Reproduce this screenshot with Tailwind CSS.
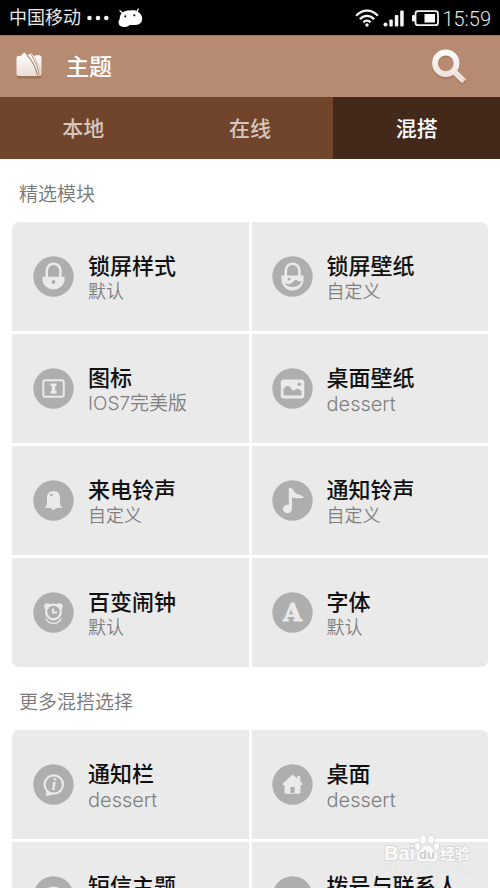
<!DOCTYPE html>
<html lang="zh-CN">
<head>
<meta charset="utf-8">
<meta name="viewport" content="width=device-width, initial-scale=1">
<title>主题</title>
<script src="https://cdn.jsdelivr.net/npm/@tailwindcss/browser@4"></script>
</head>
<body class="bg-white font-['Roboto','Noto_Sans_CJK_SC',sans-serif]">
<div class="relative flex h-screen flex-col overflow-hidden">

  <!-- Status bar -->
  <div class="flex h-[35px] shrink-0 items-center justify-between bg-black pr-[9px] pl-[9px] text-[#e6e6e6]">
    <div class="flex items-center gap-[6px]">
      <span class="text-[18px] leading-6">中国移动</span>
      <svg class="h-[6px] w-[22px]" viewBox="0 0 22 6" fill="#f2f2f2" aria-hidden="true"><circle cx="2.5" cy="3" r="2.3"/><circle cx="11" cy="3" r="2.3"/><circle cx="19.3" cy="3" r="2.3"/></svg>
      <svg class="ml-[3px] h-[20px] w-[25px]" viewBox="0 0 25 20" aria-hidden="true">
        <path d="M4.600 5.200 2 2.700M18.800 4.200 20.300 1" stroke="#fff" stroke-width="1.300" stroke-linecap="round"/>
        <path d="M4.500 4.500C7 2.700 9.500 2.400 12 2.500 15 2.200 18 2.300 20 3.800 22.800 5.600 24.300 8 24.200 11 24.100 14.500 21.500 16.800 17.400 17 15 17.100 13 16.800 11.500 17 10 18.500 8 19.200 5.500 19 2.500 18.800.5 17.300.5 14.500.5 13.200 1 12 1.700 11.300 1.500 8.500 2.500 6 4.500 4.500Z" fill="#fff"/>
        <circle cx="7.300" cy="8.300" r="1.100" fill="#111"/><circle cx="16.300" cy="7.300" r="1.100" fill="#111"/>
      </svg>
    </div>
    <div class="flex items-center">
      <svg class="h-[18px] w-[24px]" viewBox="0 0 24 18" fill="none" stroke="#f5f5f5" stroke-width="2.300" aria-hidden="true">
        <path d="M1.200 6.800C7-.1 17-.1 22.800 6.800M4.900 10.200c4-4.400 10.200-4.400 14.200 0M8.400 13.400c2.200-2.200 5-2.200 7.200 0"/><circle cx="12" cy="16" r="1.700" fill="#f5f5f5" stroke="none"/>
      </svg>
      <svg class="ml-[4px] h-[18px] w-[22px]" viewBox="0 0 22 18" fill="#f5f5f5" aria-hidden="true">
        <circle cx="2.500" cy="15.500" r="2"/><rect x="6.300" y="10.500" width="3.500" height="7" rx="1"/><rect x="11.800" y="6" width="3.500" height="11.500" rx="1"/><rect x="17.200" y="1.500" width="3.500" height="16" rx="1"/>
      </svg>
      <svg class="ml-[7px] h-[18px] w-[27px]" viewBox="0 0 27 18" aria-hidden="true">
        <rect x="3.500" y="2.200" width="22.500" height="14" rx="2.500" fill="none" stroke="#f5f5f5" stroke-width="1.800"/><rect x="0" y="6" width="3" height="6.500" rx="1.200" fill="#f5f5f5"/><rect x="12.500" y="5" width="10.500" height="8.500" fill="#fff"/>
      </svg>
      <span class="ml-[3px] pt-[2px] text-[20px] leading-6 font-light">15:59</span>
    </div>
  </div>

  <!-- Title bar -->
  <header class="flex h-[62px] shrink-0 items-center border-t border-[#a57e67] bg-[#b78b71] pr-[32px] pl-[14px]">
    <svg class="h-[32px] w-[30px]" viewBox="0 0 30 32" aria-hidden="true">
      <defs><linearGradient id="paper" x1="0" y1="0" x2="0" y2="1"><stop offset="0" stop-color="#fff"/><stop offset="1" stop-color="#e9ddd6"/></linearGradient></defs>
      <rect x="3" y="8" width="24.500" height="19.500" rx="2" fill="#6d4329" opacity=".35"/>
      <path d="M2.500 6.800Q2.500 5 4.500 5H6.500L10.300 1.200 13 4.200 17.500 2.500 20 5.500 21.500 4.300H25.500Q27.500 4.500 27.500 6.500V22.500Q27.500 25 25.500 25H4.500Q2.500 25 2.500 23Z" fill="url(#paper)"/>
      <path d="M13 4.200C18 9.500 21.500 15 23.500 24.500" fill="none" stroke="#a98470" stroke-width="1.100"/>
      <path d="M17 3.500C21.500 10 24 16 25.300 24.500" fill="none" stroke="#a98470" stroke-width=".9"/>
      <path d="M20 5.500C23 10 25 14 26.300 21" fill="none" stroke="#d5beb1" stroke-width=".7"/>
    </svg>
    <h1 class="ml-[22px] flex-1 pt-[2px] text-[23px] leading-8 font-medium text-white">主题</h1>
    <button type="button" aria-label="搜索" class="h-[40px] w-[36px]">
      <svg class="h-[40px] w-[36px]" viewBox="0 0 36 40" aria-hidden="true">
        <defs><linearGradient id="lens" gradientUnits="userSpaceOnUse" x1="0" y1="2" x2="0" y2="36"><stop offset="0" stop-color="#fff"/><stop offset="1" stop-color="#e8dcd5"/></linearGradient></defs>
        <g fill="none" stroke="#6d4329" opacity=".22"><circle cx="14" cy="18" r="11" stroke-width="6"/><path d="M22.500 26.500 32 36" stroke-width="6"/></g>
        <g fill="none" stroke="url(#lens)"><circle cx="13.800" cy="16.300" r="10.800" stroke-width="5.800"/><path d="M21.500 24 32 34.300" stroke-width="5.800"/></g>
      </svg>
    </button>
  </header>

  <!-- Tabs -->
  <nav class="grid h-[62px] shrink-0 grid-cols-3 bg-[#71452b] text-[21px] leading-8 font-medium text-[#d5c7bf]">
    <a href="#local" class="flex items-center justify-center pt-[2px]">本地</a>
    <a href="#online" class="flex items-center justify-center pt-[2px]">在线</a>
    <a href="#mix" aria-current="page" class="flex items-center justify-center bg-[#432919] pt-[2px] text-white">混搭</a>
  </nav>

  <main class="min-h-0 flex-1 overflow-hidden px-[12px]">
    <h2 class="flex h-[63px] items-center pt-[9px] pl-[7px] text-[19px] leading-6 font-[350] text-[#777]">精选模块</h2>
    <div class="grid grid-cols-2 gap-[3px] overflow-hidden rounded-[7px] font-['Inter','Noto_Sans_CJK_SC',sans-serif]">
      <button type="button" class="flex h-[109px] items-center gap-[14px] bg-[#eaeaea] pl-[21px] text-left">
        <svg class="size-[41px] shrink-0" viewBox="0 0 41 41" aria-hidden="true"><circle cx="20.500" cy="20.500" r="20.200" fill="#aeaeae"/>
          <path d="M13.800 21V14.500a6.800 6.800 0 0 1 13.600 0V21" fill="none" stroke="#eaeaea" stroke-width="2.600"/><path d="M9.500 20.800H31.500V23.500a10.800 9.800 0 0 1-22 0Z" fill="#eaeaea"/><circle cx="20.500" cy="26" r="1.900" fill="#aeaeae"/></svg>
        <span class="block pt-[2px]"><span class="block text-[22px] leading-7 font-medium text-[#111]">锁屏样式</span><span class="block text-[18px] leading-6 font-[350] text-[#808080]">默认</span></span>
      </button>
      <button type="button" class="flex h-[109px] items-center gap-[14px] bg-[#eaeaea] pl-[20px] text-left">
        <svg class="size-[41px] shrink-0" viewBox="0 0 41 41" aria-hidden="true"><circle cx="20.500" cy="20.500" r="20.200" fill="#aeaeae"/>
          <path d="M13.800 21V14.500a6.800 6.800 0 0 1 13.600 0V21" fill="none" stroke="#eaeaea" stroke-width="2.600"/><path d="M9.500 19.500H31.500V23.500a11 11 0 0 1-22 0Z" fill="#eaeaea"/><circle cx="17" cy="23.200" r="1.400" fill="#aeaeae"/><path d="M12.500 26.500C15 28.700 17 28.500 19 27.500 22 25.500 23 23.500 25 24.300 26.500 26 27.500 25.500 29.500 24.500 28.500 29 25 31 20.500 31 16.500 31 13.500 29.500 12.500 26.500Z" fill="#aeaeae"/></svg>
        <span class="block pt-[2px]"><span class="block text-[22px] leading-7 font-medium text-[#111]">锁屏壁纸</span><span class="block text-[18px] leading-6 font-[350] text-[#808080]">自定义</span></span>
      </button>
      <button type="button" class="flex h-[109px] items-center gap-[14px] bg-[#eaeaea] pl-[21px] text-left">
        <svg class="size-[41px] shrink-0" viewBox="0 0 41 41" aria-hidden="true"><circle cx="20.500" cy="20.500" r="20.200" fill="#aeaeae"/>
          <rect x="10.300" y="12.300" width="20.500" height="16.500" rx="2" fill="none" stroke="#eaeaea" stroke-width="2"/><path d="M17.500 15.500H23.500V18H22.200V23H23.500V25.500H17.500V23H18.800V18H17.500Z" fill="#eaeaea"/></svg>
        <span class="block pt-[2px]"><span class="block text-[22px] leading-7 font-medium text-[#111]">图标</span><span class="block text-[19px] leading-6 font-[350] text-[#808080]">IOS7完美版</span></span>
      </button>
      <button type="button" class="flex h-[109px] items-center gap-[14px] bg-[#eaeaea] pl-[20px] text-left">
        <svg class="size-[41px] shrink-0" viewBox="0 0 41 41" aria-hidden="true"><circle cx="20.500" cy="20.500" r="20.200" fill="#aeaeae"/>
          <rect x="8.800" y="11.500" width="23.500" height="19" rx="3" fill="#eaeaea"/><path d="M11.500 27.500V21.500C12.500 18.500 15.500 17 17.500 18.500 19 19.500 19.500 22 21 22.500 22.800 22.800 23.300 20.800 25.500 20.800 27.500 20.800 28 22.500 29.500 22.800V27.500Z" fill="#aeaeae"/><circle cx="27.300" cy="16.300" r="1.800" fill="#aeaeae"/></svg>
        <span class="block pt-[2px]"><span class="block text-[22px] leading-7 font-medium text-[#111]">桌面壁纸</span><span class="block text-[20px] leading-6 font-light text-[#808080]">dessert</span></span>
      </button>
      <button type="button" class="flex h-[109px] items-center gap-[14px] bg-[#eaeaea] pl-[21px] text-left">
        <svg class="size-[41px] shrink-0" viewBox="0 0 41 41" aria-hidden="true"><circle cx="20.500" cy="20.500" r="20.200" fill="#aeaeae"/>
          <path d="M20.500 11C24.500 11 27 13.800 27 17.500V22C27 24.500 27.500 26 29.500 28 27 27.200 24 28 22.700 28 22.500 29 21.500 30 20.500 30 19.500 30 18.500 29 18.300 28 17 28 14 27.200 11.500 28 13.500 26 14 24.500 14 22V17.500C14 13.800 16.500 11 20.500 11Z" fill="#eaeaea"/><circle cx="18.300" cy="15" r="1.300" fill="#aeaeae"/></svg>
        <span class="block pt-[2px]"><span class="block text-[22px] leading-7 font-medium text-[#111]">来电铃声</span><span class="block text-[18px] leading-6 font-[350] text-[#808080]">自定义</span></span>
      </button>
      <button type="button" class="flex h-[109px] items-center gap-[14px] bg-[#eaeaea] pl-[20px] text-left">
        <svg class="size-[41px] shrink-0" viewBox="0 0 41 41" aria-hidden="true"><circle cx="20.500" cy="20.500" r="20.200" fill="#aeaeae"/>
          <ellipse cx="15.500" cy="29" rx="4.500" ry="4.200" fill="#eaeaea"/><path d="M16.800 8C21.500 7 21.500 12.500 25.500 14.300 28 15.300 30 15 32 17.700 28 18.800 23.500 18.500 20 17.200V29H16.800Z" fill="#eaeaea"/></svg>
        <span class="block pt-[2px]"><span class="block text-[22px] leading-7 font-medium text-[#111]">通知铃声</span><span class="block text-[18px] leading-6 font-[350] text-[#808080]">自定义</span></span>
      </button>
      <button type="button" class="flex h-[109px] items-center gap-[14px] bg-[#eaeaea] pl-[21px] text-left">
        <svg class="size-[41px] shrink-0" viewBox="0 0 41 41" aria-hidden="true"><circle cx="20.500" cy="20.500" r="20.200" fill="#aeaeae"/>
          <circle cx="14.500" cy="14.500" r="3.300" fill="#eaeaea"/><circle cx="26.500" cy="14.500" r="3.300" fill="#eaeaea"/><circle cx="20.500" cy="20" r="8.500" fill="#eaeaea"/><circle cx="20.500" cy="20" r="6.200" fill="#aeaeae"/><path d="M20 16.500V20.500H24" fill="none" stroke="#eaeaea" stroke-width="2"/><path d="M12.800 24.500C15 31.500 26 31.500 28.200 24.500" fill="none" stroke="#aeaeae" stroke-width="1"/><path d="M12.800 26.500C16 33 25 33 28.200 26.500" fill="none" stroke="#eaeaea" stroke-width="1.400"/></svg>
        <span class="block pt-[2px]"><span class="block text-[22px] leading-7 font-medium text-[#111]">百变闹钟</span><span class="block text-[18px] leading-6 font-[350] text-[#808080]">默认</span></span>
      </button>
      <button type="button" class="flex h-[109px] items-center gap-[14px] bg-[#eaeaea] pl-[20px] text-left">
        <svg class="size-[41px] shrink-0" viewBox="0 0 41 41" aria-hidden="true"><circle cx="20.500" cy="20.500" r="20.200" fill="#aeaeae"/>
          <text x="20.500" y="29" text-anchor="middle" font-family="DejaVu Serif" font-weight="700" font-size="24" fill="#eaeaea" stroke="#eaeaea" stroke-width=".9">A</text></svg>
        <span class="block pt-[2px]"><span class="block text-[22px] leading-7 font-medium text-[#111]">字体</span><span class="block text-[18px] leading-6 font-[350] text-[#808080]">默认</span></span>
      </button>
    </div>

    <h2 class="flex h-[63px] items-center pt-[9px] pl-[7px] text-[19px] leading-6 font-[350] text-[#777]">更多混搭选择</h2>
    <div class="grid grid-cols-2 gap-[3px] overflow-hidden rounded-[7px] font-['Inter','Noto_Sans_CJK_SC',sans-serif]">
      <button type="button" class="flex h-[109px] items-center gap-[14px] bg-[#eaeaea] pl-[21px] text-left">
        <svg class="size-[41px] shrink-0" viewBox="0 0 41 41" aria-hidden="true"><circle cx="20.500" cy="20.500" r="20.200" fill="#aeaeae"/>
          <path d="M12 31.700C14 30 13.500 28 12.500 25.500L20 29.500C18 31.500 15 32 12 31.700Z" fill="#eaeaea"/><circle cx="20.800" cy="20.500" r="9.200" fill="#aeaeae" stroke="#eaeaea" stroke-width="2.200"/>
          <text x="20.800" y="26" text-anchor="middle" font-family="Liberation Serif" font-style="italic" font-weight="700" font-size="17" fill="#eaeaea">i</text></svg>
        <span class="block pt-[2px]"><span class="block text-[22px] leading-7 font-medium text-[#111]">通知栏</span><span class="block text-[20px] leading-6 font-light text-[#808080]">dessert</span></span>
      </button>
      <button type="button" class="flex h-[109px] items-center gap-[14px] bg-[#eaeaea] pl-[20px] text-left">
        <svg class="size-[41px] shrink-0" viewBox="0 0 41 41" aria-hidden="true"><circle cx="20.500" cy="20.500" r="20.200" fill="#aeaeae"/>
          <path d="M20.500 10.500 25.300 14.500V12H28.300V17.200L31 20.300Q30.500 21.300 28.500 21V28.300Q28.500 29.800 27 29.800H14Q12.500 29.800 12.500 28.300V21Q10.500 21.300 10 20.300Z" fill="#eaeaea"/><rect x="18.300" y="23" width="4.400" height="6" rx="1" fill="#aeaeae"/></svg>
        <span class="block pt-[2px]"><span class="block text-[22px] leading-7 font-medium text-[#111]">桌面</span><span class="block text-[20px] leading-6 font-light text-[#808080]">dessert</span></span>
      </button>
      <button type="button" class="flex h-[109px] items-center gap-[14px] bg-[#eaeaea] pl-[21px] text-left">
        <svg class="size-[41px] shrink-0" viewBox="0 0 41 41" aria-hidden="true"><circle cx="20.500" cy="20.500" r="20.200" fill="#aeaeae"/>
          <ellipse cx="20.500" cy="19.500" rx="10.500" ry="9" fill="#eaeaea"/><path d="M13 25 12 32 20 28Z" fill="#eaeaea"/></svg>
        <span class="block pt-[2px]"><span class="block text-[22px] leading-7 font-medium text-[#111]">短信主题</span><span class="block text-[20px] leading-6 font-light text-[#808080]">dessert</span></span>
      </button>
      <button type="button" class="flex h-[109px] items-center gap-[14px] bg-[#eaeaea] pl-[20px] text-left">
        <svg class="size-[41px] shrink-0" viewBox="0 0 41 41" aria-hidden="true"><circle cx="20.500" cy="20.500" r="20.200" fill="#aeaeae"/>
          <path d="M13.500 11.500 17.500 16 15.500 18.500C17 22 19.500 24.500 22.500 26L25 24 30 28C28.500 31 26 32 23 31 16 28.500 11 23 10 16 9.800 13.500 11 12.500 13.500 11.500Z" fill="#eaeaea"/></svg>
        <span class="block pt-[2px]"><span class="block text-[22px] leading-7 font-medium text-[#111]">拨号与联系人</span><span class="block text-[20px] leading-6 font-light text-[#808080]">dessert</span></span>
      </button>
    </div>
  </main>

  <!-- Watermark -->
  <div class="pointer-events-none absolute right-[27px] bottom-[13px] w-[90px]">
    <svg class="block h-[42px] w-[90px]" viewBox="0 0 90 42" aria-hidden="true">
      <g fill="#fafafa" stroke="#d6d6d6" stroke-width=".8">
        <ellipse cx="34.500" cy="13.500" rx="3" ry="4.200" transform="rotate(-15 34.500 13.500)"/><ellipse cx="40" cy="6.500" rx="3.300" ry="4.600"/><ellipse cx="48" cy="6.500" rx="3.300" ry="4.600"/><ellipse cx="53.500" cy="13.500" rx="3" ry="4.200" transform="rotate(15 53.500 13.500)"/>
        <path d="M44 12C48.500 12 50 16 53 19 57 23 54.500 29.200 50 29 46 28.500 42 28.500 38 29 33.500 29.200 31.500 23 35.500 19 38.500 16 39.500 12 44 12Z"/>
      </g>
      <g fill="#fafafa" stroke="#d2d2d2" stroke-width="1.400" paint-order="stroke" font-family="Liberation Sans" font-weight="700">
        <text x="1" y="27" font-size="20">Bai</text>
        <text x="57" y="26" font-size="15" font-family="Noto Sans CJK SC">经验</text>
      </g>
      <text x="1" y="39" font-family="Liberation Sans" font-size="11" fill="#f6f6f6" fill-opacity=".7" stroke="#dedede" stroke-width=".6" paint-order="stroke">jingyan.baidu.com</text>
      <text x="44" y="26" text-anchor="middle" font-family="Liberation Sans" font-weight="700" font-size="13" fill="#cbcbcb">du</text>
    </svg>
  </div>
</div>
</body>
</html>
